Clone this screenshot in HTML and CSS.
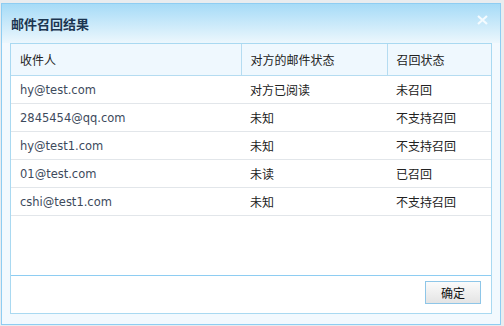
FILE: index.html
```html
<!DOCTYPE html>
<html lang="zh-CN">
<head>
    <meta charset="UTF-8">
    <title>邮件召回结果</title>
    <link rel="stylesheet" href="styles.css">
</head>
<body>
    <div class="dialog">
        <div class="dialog-title">
            <span>邮件召回结果</span>
            <svg class="close" width="11" height="10" viewBox="0 0 11 10">
                <path d="M1 1 L10 9 M10 1 L1 9" stroke="#f4fbff" stroke-width="2.2" fill="none"/>
            </svg>
        </div>
        <div class="panel">
            <table class="result-table">
                <tr>
                    <th class="col-user">收件人</th>
                    <th class="col-read">对方的邮件状态</th>
                    <th>召回状态</th>
                </tr>
                <tr>
                    <td class="mail">hy@test.com</td>
                    <td>对方已阅读</td>
                    <td>未召回</td>
                </tr>
                <tr>
                    <td class="mail">2845454@qq.com</td>
                    <td>未知</td>
                    <td>不支持召回</td>
                </tr>
                <tr>
                    <td class="mail">hy@test1.com</td>
                    <td>未知</td>
                    <td>不支持召回</td>
                </tr>
                <tr>
                    <td class="mail">01@test.com</td>
                    <td>未读</td>
                    <td>已召回</td>
                </tr>
                <tr>
                    <td class="mail">cshi@test1.com</td>
                    <td>未知</td>
                    <td>不支持召回</td>
                </tr>
            </table>
            <div class="panel-footer">
                <button class="ok-button">确定</button>
            </div>
        </div>
    </div>
</body>
</html>
```

FILE: styles.css
```css
* {
    margin: 0;
    padding: 0;
    box-sizing: border-box;
}

body {
    background: #e9ecef;
    font-family: "Liberation Sans", "Noto Sans CJK SC", sans-serif;
    font-size: 12px;
    color: #222;
    padding: 3px 3px 1px 1px;
    height: 326px;
}

.dialog {
    width: 500px;
    height: 322px;
    border: 1px solid #8ecdf2;
    background: #f2f9fe;
    display: flex;
    flex-direction: column;
    padding: 0 8px 10px 8px;
}

.dialog-title {
    height: 39px;
    margin: 0 -8px;
    padding: 0 12px 0 9px;
    display: flex;
    justify-content: space-between;
    align-items: center;
    background: linear-gradient(#a6dbf7, #ecf7fd);
    font-weight: bold;
    font-size: 13px;
    color: #1b3550;
}

.close {
    margin-top: -8px;
}

.panel {
    flex: 1;
    display: flex;
    flex-direction: column;
    background: #fff;
    border: 1px solid #a9d9f1;
}

.result-table {
    width: 100%;
    border-collapse: collapse;
}

.result-table th {
    height: 31px;
    background: #eff8fe;
    font-weight: normal;
    text-align: left;
    padding-left: 9px;
    border-bottom: 1px solid #b5dcf1;
    border-left: 1px solid #b5dcf1;
}

.result-table th:first-child {
    border-left: none;
}

.col-user {
    width: 230px;
}

.col-read {
    width: 146px;
}

.result-table td {
    height: 28px;
    padding-left: 9px;
    border-bottom: 1px solid #e2e6ea;
}

.result-table td.mail {
    font-family: "DejaVu Sans", sans-serif;
    font-size: 11.5px;
    color: #3d4a5c;
    padding-top: 1px;
}

.panel-footer {
    margin-top: auto;
    height: 38px;
    border-top: 1px solid #8ecdf2;
    display: flex;
    justify-content: flex-end;
    align-items: center;
    padding-right: 10px;
}

.ok-button {
    width: 56px;
    height: 23px;
    border: 1px solid #8ec6e8;
    background: linear-gradient(#fbfbfb, #e4e4e4);
    font-family: "Liberation Sans", "Noto Sans CJK SC", sans-serif;
    font-size: 12px;
    color: #111;
    margin-bottom: 4px;
}
```
